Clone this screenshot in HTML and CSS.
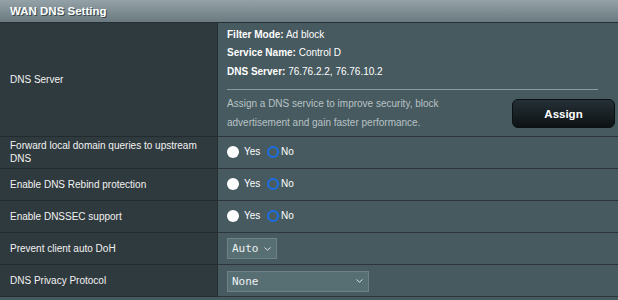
FILE: index.html
```html
<!DOCTYPE html>
<html lang="en">
<head>
    <meta charset="UTF-8">
    <title>WAN DNS Setting</title>
    <link rel="stylesheet" href="styles.css">
</head>
<body>
    <table class="form-table">
        <thead>
            <tr class="title-row">
                <td colspan="2" class="table-title">WAN DNS Setting</td>
            </tr>
        </thead>
        <tbody>
            <tr class="dns-row">
                <th>DNS Server</th>
                <td>
                    <div class="dns-info">
                        <div><b>Filter Mode:</b> Ad block</div>
                        <div><b>Service Name:</b> Control D</div>
                        <div><b>DNS Server:</b> 76.76.2.2, 76.76.10.2</div>
                    </div>
                    <div class="divider"></div>
                    <div class="assign-box">
                        <div class="assign-desc">Assign a DNS service to improve security, block advertisement and gain faster performance.</div>
                        <button class="button-gen">Assign</button>
                    </div>
                </td>
            </tr>
            <tr class="tall">
                <th>Forward local domain queries to upstream DNS</th>
                <td>
                    <label class="radio"><input type="radio" name="fwd">Yes</label>
                    <label class="radio"><input type="radio" name="fwd" checked>No</label>
                </td>
            </tr>
            <tr>
                <th>Enable DNS Rebind protection</th>
                <td>
                    <label class="radio"><input type="radio" name="rebind">Yes</label>
                    <label class="radio"><input type="radio" name="rebind" checked>No</label>
                </td>
            </tr>
            <tr>
                <th>Enable DNSSEC support</th>
                <td>
                    <label class="radio"><input type="radio" name="dnssec">Yes</label>
                    <label class="radio"><input type="radio" name="dnssec" checked>No</label>
                </td>
            </tr>
            <tr>
                <th>Prevent client auto DoH</th>
                <td>
                    <div class="input-option small">Auto
                        <svg class="caret" width="7" height="4" viewBox="0 0 7 4"><path d="M0.5 0.5 L3.5 3.2 L6.5 0.5" fill="none" stroke="#d8e0e2" stroke-width="1"/></svg>
                    </div>
                </td>
            </tr>
            <tr>
                <th>DNS Privacy Protocol</th>
                <td>
                    <div class="input-option wide">None
                        <svg class="caret" width="7" height="4" viewBox="0 0 7 4"><path d="M0.5 0.5 L3.5 3.2 L6.5 0.5" fill="none" stroke="#d8e0e2" stroke-width="1"/></svg>
                    </div>
                </td>
            </tr>
        </tbody>
    </table>
</body>
</html>
```

FILE: styles.css
```css
body {
    margin: 0;
    background: #475a5f;
    font-family: "Liberation Sans", Arial, sans-serif;
    font-size: 10px;
    color: #ffffff;
}
.form-table {
    width: 618px;
    border-collapse: collapse;
}
.title-row {
    height: 22px;
}
.table-title {
    padding: 0 0 0 10px;
    background: linear-gradient(#94a2a7, #6b7a80);
    font-weight: bold;
    font-size: 11.5px;
    color: #ffffff;
    text-shadow: 1px 1px 0 #3a474c;
    border-bottom: 1px solid #263034;
}
th {
    width: 207px;
    padding: 0 0 0 10px;
    background: #2f3a3e;
    font-weight: normal;
    text-align: left;
    color: #f2f2f2;
    border-bottom: 1px solid #222b2e;
    border-right: 1px solid #263034;
}
td {
    padding: 0 0 0 9px;
    background: #475a5f;
    border-bottom: 1px solid #2c3639;
}
tr {
    height: 32px;
}
tr.tall th {
    line-height: 12.5px;
}
.dns-row td {
    padding: 3px 3px 4px 9px;
}
.dns-info {
    line-height: 18.5px;
    color: #ffffff;
}
.divider {
    width: 371px;
    height: 1px;
    margin: 8px 0 0;
    background: #8a9a9f;
}
.assign-box {
    display: flex;
    align-items: center;
    justify-content: space-between;
    margin-top: 5px;
}
.assign-desc {
    width: 250px;
    line-height: 18.5px;
    color: #b8c3c6;
}
.button-gen {
    width: 103px;
    height: 29px;
    border: 1px solid #0b1012;
    border-radius: 6px;
    background: linear-gradient(#253037, #0d1214);
    color: #ffffff;
    font-family: "Liberation Sans", Arial, sans-serif;
    font-weight: bold;
    font-size: 11.5px;
}
.radio {
    display: inline-flex;
    align-items: center;
    margin-right: 4px;
    color: #ffffff;
}
.radio input {
    appearance: none;
    width: 12px;
    height: 12px;
    margin: 0 5px 0 0;
    border-radius: 50%;
    background: #ffffff;
}
.radio input:checked {
    margin-right: 2px;
    border: 2px solid #1a6fe6;
    background: #4b5c61;
}
.input-option {
    display: inline-flex;
    align-items: center;
    justify-content: space-between;
    box-sizing: border-box;
    height: 21px;
    padding: 0 5px 0 4px;
    background: #576e73;
    border: 1px solid #6f8287;
    font-family: "DejaVu Sans Mono", "Liberation Mono", monospace;
    font-size: 11px;
    color: #eef2f3;
}
.input-option.small {
    width: 50px;
}
.input-option.wide {
    width: 142px;
    margin-top: 1px;
}
```
